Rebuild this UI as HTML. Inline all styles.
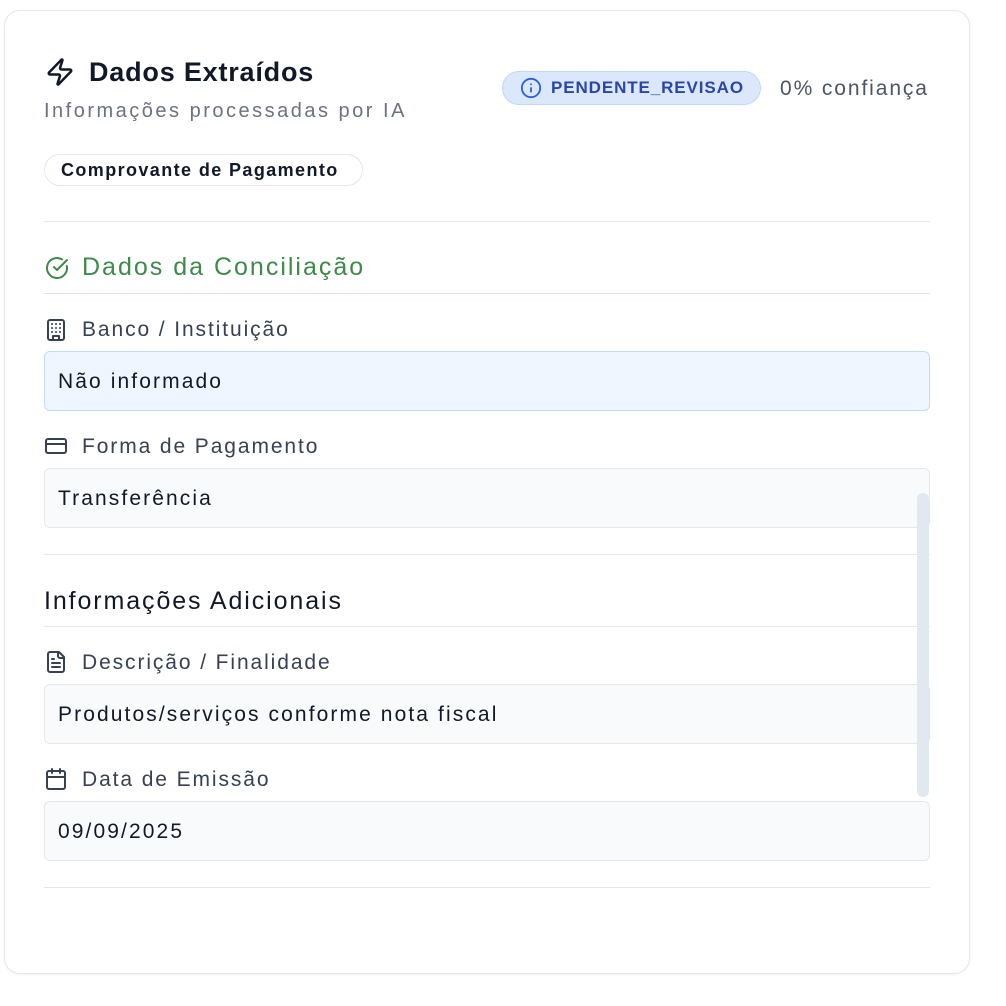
<!DOCTYPE html>
<html><head><meta charset="utf-8"><style>
*{margin:0;padding:0;box-sizing:border-box}
html,body{width:1006px;height:1006px;background:#fff;overflow:hidden;font-family:"Liberation Sans",sans-serif}
.card{position:absolute;left:4px;top:10px;width:966px;height:964px;border:1px solid #e5e7eb;border-radius:16px;background:#fff;box-shadow:0 1px 3px rgba(0,0,0,.05)}
.a{position:absolute;white-space:nowrap}
.hr{position:absolute;left:44px;width:886px;height:1px;background:#e5e7eb}
.lbl{font-size:21px;color:#374151;letter-spacing:1.9px;line-height:24px}
.inp{position:absolute;left:44px;width:886px;height:60px;border:1px solid #e5e7eb;background:#f8fafc;border-radius:6px;font-size:21px;color:#111827;letter-spacing:2.1px;line-height:59px;padding-left:13px}
svg.ic{position:absolute;fill:none;stroke:#374151;stroke-width:2;stroke-linecap:round;stroke-linejoin:round}
</style></head><body>
<div class="card"></div>
<svg class="ic" style="left:45px;top:57px;stroke:#111827" width="30" height="30" viewBox="0 0 24 24"><path d="M4 14a1 1 0 0 1-.78-1.63l9.9-10.2a.5.5 0 0 1 .86.46l-1.92 6.02A1 1 0 0 0 13 10h7a1 1 0 0 1 .78 1.63l-9.9 10.2a.5.5 0 0 1-.86-.46l1.92-6.02A1 1 0 0 0 11 14z"/></svg>
<div class="a" style="left:89px;top:56px;font-size:27px;font-weight:bold;color:#111827;line-height:32px;letter-spacing:0.8px">Dados Extraídos</div>
<div class="a" style="left:44px;top:99px;font-size:20px;color:#6b7280;line-height:24px;letter-spacing:2.5px">Informações processadas por IA</div>
<div class="a" style="left:502px;top:71px;width:259px;height:34px;background:#dbe7fb;border:1px solid #c4d6f6;border-radius:17px"></div>
<svg class="ic" style="left:520px;top:77px;stroke:#2f5fe0" width="22" height="22" viewBox="0 0 24 24"><circle cx="12" cy="12" r="10"/><path d="M12 16v-4M12 8h.01"/></svg>
<div class="a" style="left:551px;top:77px;font-size:17px;font-weight:bold;color:#2a46a8;line-height:22px;letter-spacing:0.9px">PENDENTE_REVISAO</div>
<div class="a" style="left:780px;top:77px;font-size:21px;color:#4b5563;line-height:24px;letter-spacing:1.9px">0% confiança</div>
<div class="a" style="left:44px;top:154px;width:319px;height:32px;border:1px solid #e5e7eb;border-radius:16px"></div>
<div class="a" style="left:61px;top:159px;font-size:18px;font-weight:bold;color:#111827;line-height:22px;letter-spacing:1.4px">Comprovante de Pagamento</div>
<div class="hr" style="top:221px"></div>
<svg class="ic" style="left:45px;top:256px;stroke:#3d8a4a" width="24" height="24" viewBox="0 0 24 24"><path d="M21.8 10A10 10 0 1 1 17 3.34"/><path d="m9 11 3 3L22 4"/></svg>
<div class="a" style="left:82px;top:253px;font-size:25px;color:#3d8a4a;line-height:28px;letter-spacing:2px">Dados da Conciliação</div>
<div class="hr" style="top:293px;background:#d6ecda"></div>
<svg class="ic" style="left:44px;top:318px" width="24" height="24" viewBox="0 0 24 24"><rect x="4" y="2" width="16" height="20" rx="2"/><path d="M9 22v-4h6v4M8 6h.01M16 6h.01M12 6h.01M12 10h.01M12 14h.01M16 10h.01M16 14h.01M8 10h.01M8 14h.01"/></svg>
<div class="a lbl" style="left:82px;top:318px">Banco / Instituição</div>
<div class="inp" style="top:351px;background:#eff6ff;border-color:#bfdbfe">Não informado</div>
<svg class="ic" style="left:44px;top:434px" width="24" height="24" viewBox="0 0 24 24"><rect x="2" y="5" width="20" height="14" rx="2"/><path d="M2 10h20"/></svg>
<div class="a lbl" style="left:82px;top:435px">Forma de Pagamento</div>
<div class="inp" style="top:468px">Transferência</div>
<div class="hr" style="top:554px"></div>
<div class="a" style="left:44px;top:587px;font-size:25px;color:#111827;line-height:28px;letter-spacing:1.9px">Informações Adicionais</div>
<div class="hr" style="top:626px"></div>
<svg class="ic" style="left:44px;top:650px" width="24" height="24" viewBox="0 0 24 24"><path d="M15 2H6a2 2 0 0 0-2 2v16a2 2 0 0 0 2 2h12a2 2 0 0 0 2-2V7z"/><path d="M14 2v4a2 2 0 0 0 2 2h4M10 9H8M16 13H8M16 17H8"/></svg>
<div class="a lbl" style="left:82px;top:651px">Descrição / Finalidade</div>
<div class="inp" style="top:684px">Produtos/serviços conforme nota fiscal</div>
<svg class="ic" style="left:44px;top:767px" width="24" height="24" viewBox="0 0 24 24"><path d="M8 2v4M16 2v4"/><rect x="3" y="4" width="18" height="18" rx="2"/><path d="M3 10h18"/></svg>
<div class="a lbl" style="left:82px;top:768px">Data de Emissão</div>
<div class="inp" style="top:801px">09/09/2025</div>
<div class="hr" style="top:887px"></div>
<div class="a" style="left:917px;top:493px;width:12px;height:304px;background:#e2e8f0;border-radius:6px"></div>
</body></html>
